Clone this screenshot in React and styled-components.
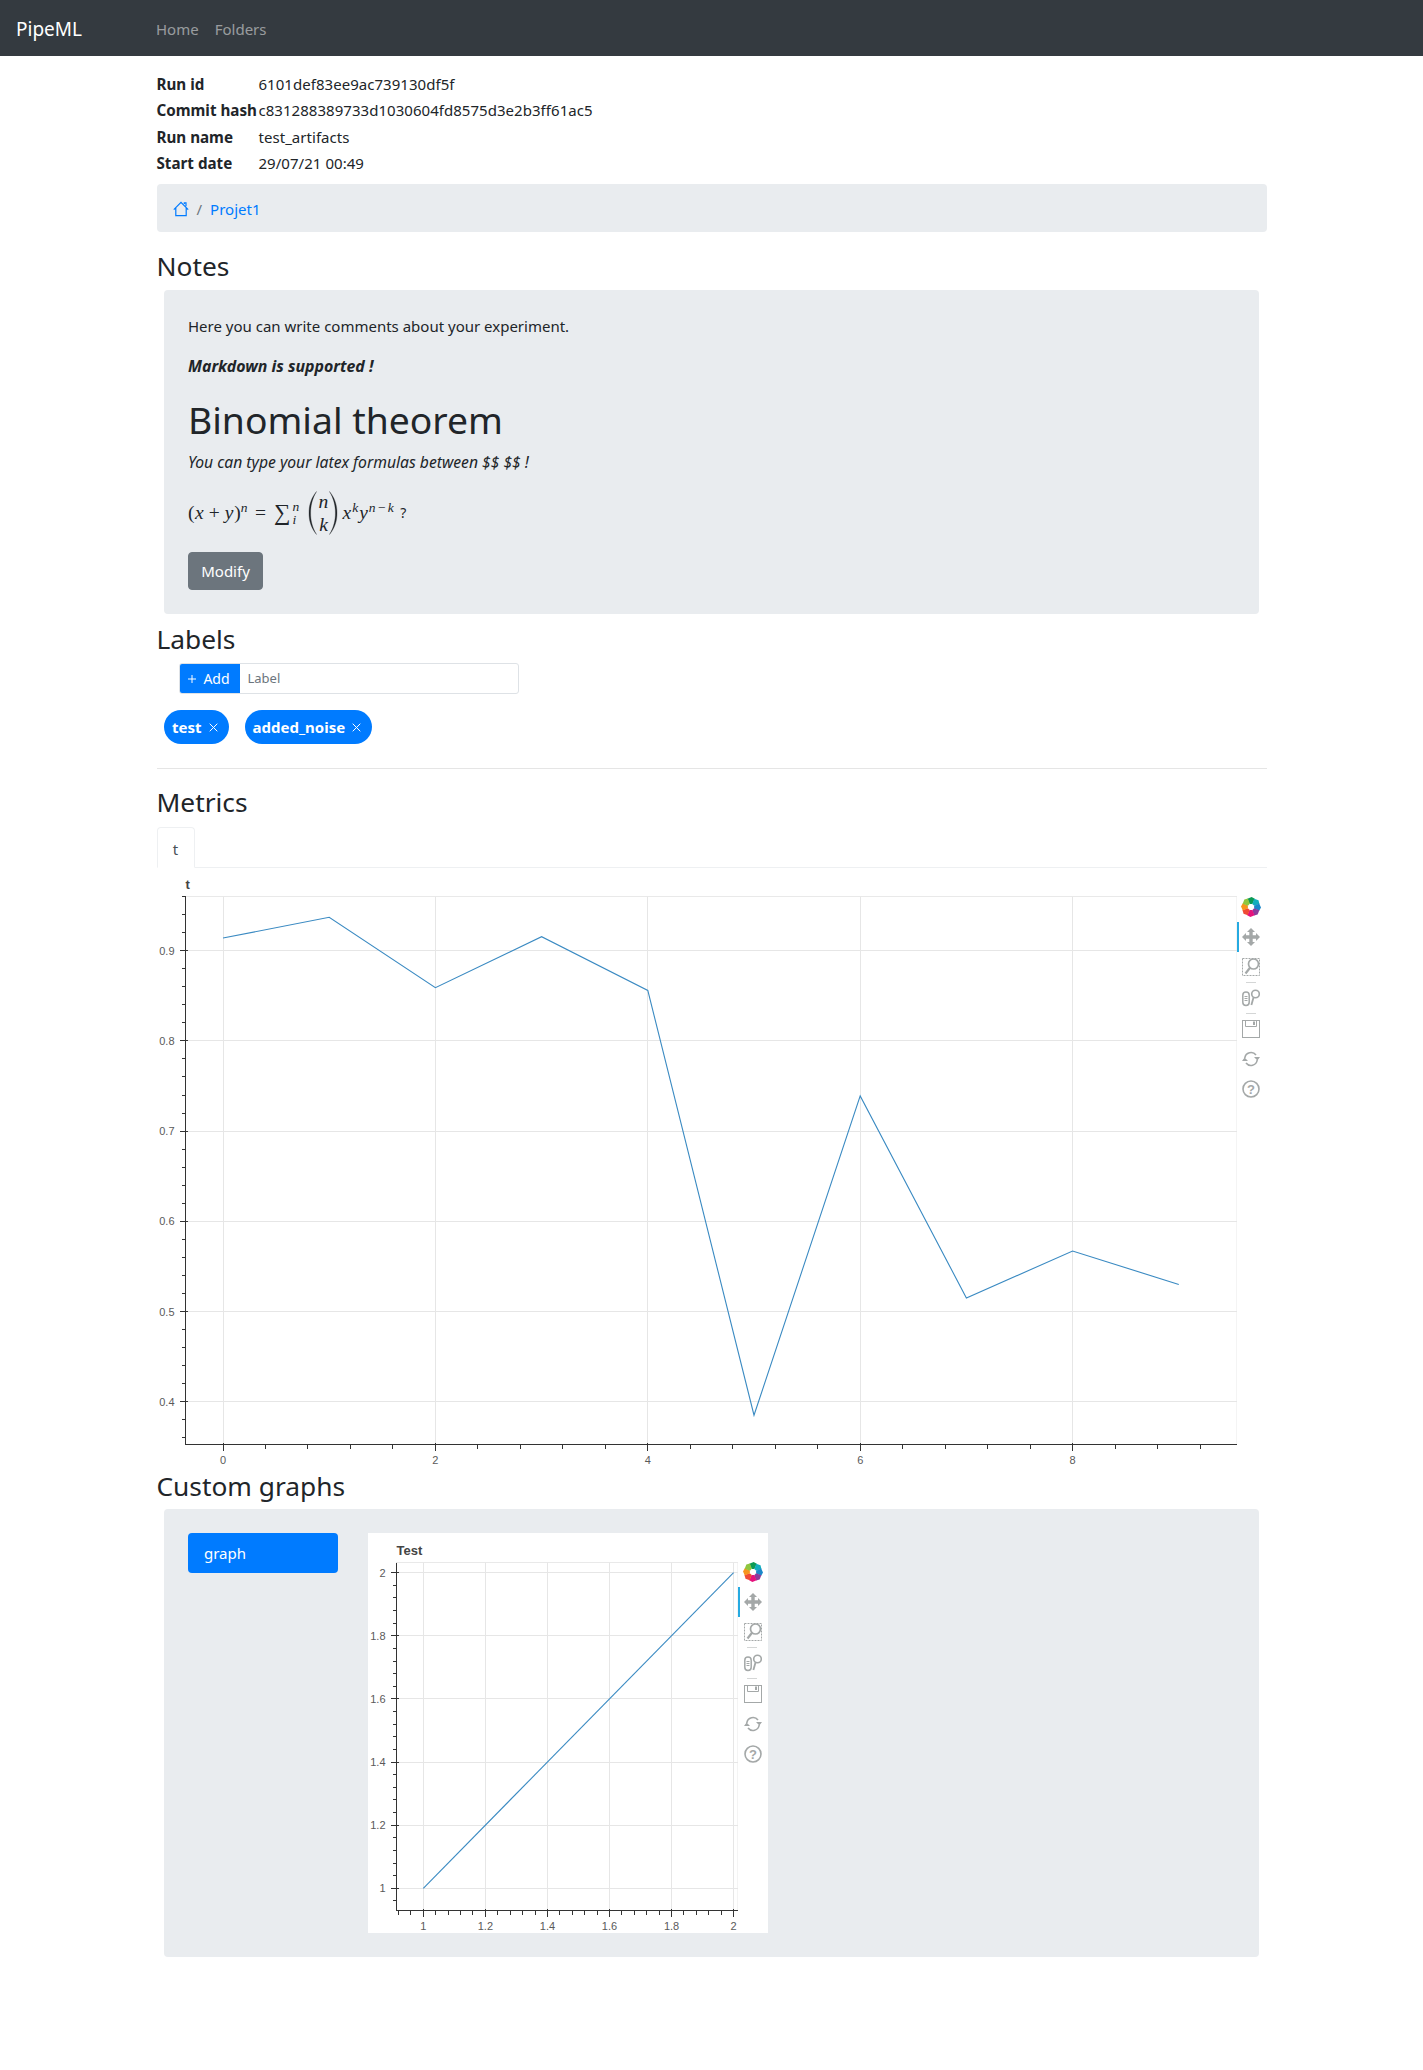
import React from 'react';
import styled, { createGlobalStyle } from 'styled-components';

const Global = createGlobalStyle`
  html, body { margin: 0; padding: 0; background: #fff; }
  body { font-family: "Noto Sans", "Open Sans", sans-serif; font-size: 15px; line-height: 24px; color: #212529; }
  * { box-sizing: border-box; }
`;

const Navbar = styled.nav`
  height: 56px; background: #343a40; display: flex; align-items: center; padding: 1px 16px 0;
`;
const Brand = styled.a`
  width: 140px; color: #fff; font-size: 19px;
`;
const NavLink = styled.a`
  color: rgba(255,255,255,.5); margin-right: 16px; font-size: 15px;
`;
const Container = styled.main`
  width: 1140px; margin: 0 auto; padding: 15px 15px 113px;
`;
const InfoRow = styled.div`
  display: grid; grid-template-columns: 102px 1fr; height: 26.25px; line-height: 26px; white-space: nowrap; letter-spacing: .04px;
`;
const InfoKey = styled.b`
  font-weight: 700; font-size: 15.2px; letter-spacing: 0;
`;
const Breadcrumb = styled.div`
  margin-top: 8px; height: 48px; background: #e9ecef; border-radius: 4px; display: flex; align-items: center; padding: 1px 16px 0; gap: 8px; color: #6c757d;
`;
const Crumb = styled.a`
  color: #007bff;
`;
const Heading = styled.h3`
  font-weight: 400; font-size: 26.3px; line-height: 34px; margin: ${p => p.$top}px 0 ${p => p.$bottom}px;
`;
const Panel = styled.section`
  margin: 0 7.5px; background: #e9ecef; border-radius: 4px; padding: 24px;
`;
const Para = styled.p`
  margin: 0 0 16px;
`;
const BoldLine = styled.b`
  font-weight: 700; font-style: italic; font-size: 15.9px;
`;
const ItalicLine = styled.i`
  font-style: italic; font-size: 15.7px;
`;
const Title = styled.h1`
  font-weight: 400; font-size: 37.3px; line-height: 48px; margin: 0 0 8px; padding-top: 2px; height: 48px;
`;
const MathLine = styled.div`
  display: flex; align-items: center; height: 46px; margin-bottom: 16px; font-family: "Liberation Serif", serif; font-size: 19.5px; white-space: pre;
`;
const MathVar = styled.i`
  font-style: italic; letter-spacing: 1px; margin-left: ${p => p.$lead || 0}px;
`;
const MathOp = styled.span`
  margin: 0 ${p => p.$before}px 0 ${p => p.$after}px;
`;
const Sum = styled.span`
  font-size: 23px;
`;
const Sup = styled.sup`
  font-size: 13.5px; line-height: 0; vertical-align: 7px; font-style: italic; letter-spacing: ${p => p.$track || 0}px;
`;
const ScriptStack = styled.span`
  display: inline-flex; flex-direction: column; font-size: 13.5px; line-height: 13px; font-style: italic; margin-left: 2px; width: 9px;
`;
const Binom = styled.span`
  display: inline-flex; align-items: center; margin: 0 3px 0 7px;
`;
const BinomBody = styled.span`
  display: inline-flex; flex-direction: column; align-items: center; font-style: italic; line-height: 23px; width: 12px; font-size: 19.5px;
`;
const QuestionMark = styled.span`
  font-family: "Noto Sans", sans-serif; font-size: 14px; margin-left: 5px;
`;
const ModifyButton = styled.button`
  display: block; width: 75px; height: 38px; background: #6c757d; color: #fff; border: 1px solid #6c757d; border-radius: 4px; font: inherit; padding: 0;
`;
const InputGroup = styled.div`
  margin-left: 22px; width: 340px; height: 31px; display: flex; border: 1px solid #dee2e6; border-radius: 3px; overflow: hidden;
`;
const AddButton = styled.button`
  width: 61px; margin: -1px 0 -1px -1px; background: #007bff; color: #fff; border: none; font: inherit; font-size: 14px; padding: 0; display: flex; align-items: center; justify-content: center; gap: 7px;
`;
const LabelInput = styled.div`
  flex: 1; padding-left: 8px; color: #6c757d; font-size: 13px; line-height: 29px;
`;
const Chips = styled.div`
  display: flex; gap: 16px; margin: 16px 0 0 7.5px;
`;
const Chip = styled.span`
  height: 34px; background: #007bff; color: #fff; border-radius: 17px; font-weight: 700; font-size: 15px; display: flex; align-items: center; padding: 0 11px 0 8px; gap: 7px;
`;
const Rule = styled.hr`
  border: 0; border-top: 1px solid rgba(0,0,0,.1); margin: 24px 0 0;
`;
const Tabs = styled.div`
  height: 41px; border-bottom: 1px solid #eef0f2; display: flex;
`;
const Tab = styled.div`
  width: 38px; height: 41px; background: #fff; border: 1px solid #eef0f2; border-bottom-color: #fff; border-radius: 4px 4px 0 0; color: #495057; text-align: center; line-height: 42px;
`;
const PlotWrap = styled.div`
  display: flex; width: ${p => p.$w}px; height: ${p => p.$h}px; background: #fff; flex: none;
`;
const Tools = styled.div`
  width: 30px; padding-top: 24px; display: flex; flex-direction: column; flex: none;
`;
const ToolCell = styled.div`
  width: 30px; height: 30px; display: flex; align-items: center; justify-content: center; padding-right: 1px;
  box-shadow: ${p => p.$active ? 'inset 2px 0 0 #26aae1' : 'none'};
`;
const ToolDivider = styled.div`
  width: 10px; height: 1px; background: #d4d6d6; margin-left: 9px;
`;
const PlotSvg = styled.svg`
  display: block; flex: none;
  text { font-family: "Liberation Sans", Arial, sans-serif; font-size: 11px; fill: #5a5a5a; }
  text.title { font-size: 13px; font-weight: 700; fill: #444; }
`;
const CustomBody = styled(Panel)`
  display: flex; gap: 30px;
`;
const GraphButton = styled.a`
  width: 150px; height: 40px; background: #007bff; color: #fff; border-radius: 4px; padding: 8px 16px; flex: none;
`;

const ICON = '#a4a8a8';
const LogoColors = ['#0c9b54', '#12aebd', '#1b87c9', '#8c3a9c', '#e5127d', '#ef4a36', '#f7941d', '#8fc63f'];
const Logo = () => (
  <svg width="20" height="20" viewBox="-10 -10 20 20">
    {LogoColors.map((c, i) => (
      <polygon key={c} fill={c} transform={`rotate(${i * 45})`} points="-1.3,-3.1 1.4,-3.1 3.8,-8.2 0.6,-10 -3.6,-8.2" />
    ))}
  </svg>
);
const PanIcon = () => (
  <svg width="18" height="18" viewBox="0 0 18 18"><path fill={ICON} d="M9 0 L13 4 H10.7 V7.3 H14 V5 L18 9 L14 13 V10.7 H10.7 V14 H13 L9 18 L5 14 H7.3 V10.7 H4 V13 L0 9 L4 5 V7.3 H7.3 V4 H5 Z" /></svg>
);
const BoxZoomIcon = () => (
  <svg width="18" height="18" viewBox="0 0 18 18" fill="none" stroke={ICON}>
    <rect x=".5" y=".5" width="17" height="17" strokeDasharray="2 1" />
    <circle cx="11.5" cy="6" r="5" fill="#fff" strokeWidth="1.7" />
    <path d="M8 9.8 L3.5 15.5" strokeWidth="2.2" />
  </svg>
);
const WheelIcon = () => (
  <svg width="18" height="18" viewBox="0 0 18 18" fill="none" stroke={ICON}>
    <rect x=".8" y="3" width="6.4" height="13.5" rx="3.2" strokeWidth="1.5" />
    <path d="M2.5 7.5 H5.5 M2.5 9.5 H5.5 M2.5 11.5 H5.5" />
    <circle cx="13.5" cy="5" r="3.8" strokeWidth="1.6" />
    <path d="M11.5 8.5 L9.4 16" strokeWidth="1.8" />
  </svg>
);
const SaveIcon = () => (
  <svg width="18" height="18" viewBox="0 0 18 18" fill="none" stroke={ICON}>
    <rect x=".5" y=".5" width="17" height="17" />
    <path d="M3.5 .5 V6.5 H14.5 V.5" />
    <rect x="11" y="1.5" width="2" height="3.5" fill={ICON} stroke="none" />
  </svg>
);
const ResetIcon = () => (
  <svg width="18" height="18" viewBox="0 0 18 18" fill="none" stroke={ICON} strokeWidth="1.6">
    <path d="M2.8 8 A6.3 6.3 0 0 1 14 5" />
    <path d="M15.2 10 A6.3 6.3 0 0 1 4 13" />
    <path fill={ICON} stroke="none" d="M12 7 H18 L15.4 10.5 Z M6 11 H0 L2.6 7.5 Z" />
  </svg>
);
const HelpIcon = () => (
  <svg width="18" height="18" viewBox="0 0 18 18" fill="none" stroke={ICON}>
    <circle cx="9" cy="9" r="8" strokeWidth="1.6" />
    <text x="9" y="13.5" textAnchor="middle" stroke="none" fill={ICON} fontFamily="Liberation Sans, sans-serif" fontWeight="700" fontSize="13">?</text>
  </svg>
);

const Toolbar = () => (
  <Tools>
    <ToolCell><Logo /></ToolCell>
    <ToolCell $active><PanIcon /></ToolCell>
    <ToolCell><BoxZoomIcon /></ToolCell>
    <ToolDivider />
    <ToolCell><WheelIcon /></ToolCell>
    <ToolDivider />
    <ToolCell><SaveIcon /></ToolCell>
    <ToolCell><ResetIcon /></ToolCell>
    <ToolCell><HelpIcon /></ToolCell>
  </Tools>
);

const range = (from, to, step) => {
  const out = [];
  const n = Math.round((to - from) / step);
  for (let i = 0; i <= n; i++) out.push(from + i * step);
  return out;
};
const crisp = v => Math.round(v - 0.5) + 0.5;

const Chart = ({ w, h, title, titleGap, box, x, y, data }) => {
  const sx = v => x.origin + (v - x.base) * x.scale;
  const sy = v => y.origin - (v - y.base) * y.scale;
  const inX = v => sx(v) >= box.l && sx(v) <= box.r;
  const inY = v => sy(v) >= box.t && sy(v) <= box.b;
  const xMajor = x.major.filter(inX);
  const yMajor = y.major.filter(inY);
  const xMinor = range(x.minorFrom, x.minorTo, x.minor).filter(inX);
  const yMinor = range(y.minorFrom, y.minorTo, y.minor).filter(inY);
  return (
    <PlotSvg width={w} height={h} viewBox={`0 0 ${w} ${h}`}>
      <rect x={box.l} y={box.t} width={box.r - box.l} height={box.b - box.t} fill="#fff" stroke="#e9e9e9" />
      {xMajor.map(v => <line key={v} x1={crisp(sx(v))} x2={crisp(sx(v))} y1={box.t} y2={box.b} stroke="#e6e6e6" />)}
      {yMajor.map(v => <line key={v} y1={crisp(sy(v))} y2={crisp(sy(v))} x1={box.l} x2={box.r} stroke="#e6e6e6" />)}
      <polyline fill="none" stroke="#3a8ac2" strokeWidth="1.1" points={data.map(([a, b]) => `${sx(a)},${sy(b)}`).join(' ')} />
      <g stroke="#333" shapeRendering="crispEdges">
        <line x1={box.l} x2={box.l} y1={box.t} y2={box.b + 0.5} />
        <line x1={box.l} x2={box.r} y1={box.b} y2={box.b} />
        {xMinor.map(v => <line key={v} x1={crisp(sx(v))} x2={crisp(sx(v))} y1={box.b} y2={box.b + 4} />)}
        {yMinor.map(v => <line key={v} y1={crisp(sy(v))} y2={crisp(sy(v))} x1={box.l - 4} x2={box.l} />)}
        {xMajor.map(v => <line key={v} x1={crisp(sx(v))} x2={crisp(sx(v))} y1={box.b - 2} y2={box.b + 6} />)}
        {yMajor.map(v => <line key={v} y1={crisp(sy(v))} y2={crisp(sy(v))} x1={box.l - 6} x2={box.l + 2} />)}
      </g>
      {xMajor.map(v => <text key={v} x={sx(v)} y={box.b + 19} textAnchor="middle">{x.label(v)}</text>)}
      {yMajor.map(v => <text key={v} x={box.l - 11} y={sy(v) + 4} textAnchor="end">{y.label(v)}</text>)}
      <text className="title" x={box.l} y={box.t - titleGap}>{title}</text>
    </PlotSvg>
  );
};

const metricValues = [0.914, 0.937, 0.859, 0.9155, 0.856, 0.385, 0.739, 0.515, 0.567, 0.53];

const fmt = v => String(Number(v.toFixed(2)));

const Paren = ({ flip }) => (
  <svg width="9" height="44" viewBox="0 0 9 44" style={flip ? { transform: 'scaleX(-1)' } : undefined}>
    <path d="M8.5 .5 C2.5 8 1 15 1 22 C1 29 2.5 36 8.5 43.5 C4 36 2.6 29 2.6 22 C2.6 15 4 8 8.5 .5 Z" fill="#212529" stroke="#212529" strokeWidth=".3" />
  </svg>
);
const CloseIcon = () => (
  <svg width="9" height="9" viewBox="0 0 9 9" stroke="#fff" strokeWidth="1"><path d="M.7 .7 L8.3 8.3 M8.3 .7 L.7 8.3" /></svg>
);
const PlusIcon = () => (
  <svg width="8" height="8" viewBox="0 0 8 8" stroke="#fff" strokeWidth="1"><path d="M4 0 V8 M0 4 H8" /></svg>
);

export default function App() {
  return (
    <>
      <Global />
      <Navbar>
        <Brand>PipeML</Brand>
        <NavLink>Home</NavLink>
        <NavLink>Folders</NavLink>
      </Navbar>
      <Container>
        <InfoRow><InfoKey>Run id</InfoKey><span>6101def83ee9ac739130df5f</span></InfoRow>
        <InfoRow><InfoKey>Commit hash</InfoKey><span>c831288389733d1030604fd8575d3e2b3ff61ac5</span></InfoRow>
        <InfoRow><InfoKey>Run name</InfoKey><span>test_artifacts</span></InfoRow>
        <InfoRow><InfoKey>Start date</InfoKey><span>29/07/21 00:49</span></InfoRow>
        <Breadcrumb>
          <svg width="16" height="16" viewBox="0 0 16 16" fill="none" stroke="#007bff" strokeWidth="1.2">
            <path d="M.8 8.6 L8 1.4 L15.2 8.6 M2.8 6.8 V14.6 H13.2 V6.8 M11.3 3 V1.8 H13 V5.2" />
          </svg>
          <span>/</span>
          <Crumb>Projet1</Crumb>
        </Breadcrumb>

        <Heading $top={17} $bottom={7}>Notes</Heading>
        <Panel>
          <Para>Here you can write comments about your experiment.</Para>
          <Para><BoldLine>Markdown is supported !</BoldLine></Para>
          <Title>Binomial theorem</Title>
          <Para><ItalicLine>You can type your latex formulas between $$ $$ !</ItalicLine></Para>
          <MathLine>
            <span>(<MathVar $lead={.5}>x</MathVar></span>
            <MathOp $after={4} $before={5}>+</MathOp>
            <span><MathVar>y</MathVar>)<Sup>n</Sup></span>
            <MathOp $after={7.5} $before={8}>=</MathOp>
            <Sum>∑</Sum>
            <ScriptStack><span>n</span><span>i</span></ScriptStack>
            <Binom>
              <Paren />
              <BinomBody><span>n</span><span>k</span></BinomBody>
              <Paren flip />
            </Binom>
            <span><MathVar $lead={1}>x</MathVar><Sup $track={1}>k</Sup><MathVar>y</MathVar><Sup $track={1.5}>n−k</Sup></span>
            <QuestionMark>?</QuestionMark>
          </MathLine>
          <ModifyButton>Modify</ModifyButton>
        </Panel>

        <Heading $top={8} $bottom={7}>Labels</Heading>
        <InputGroup>
          <AddButton><PlusIcon /><span>Add</span></AddButton>
          <LabelInput>Label</LabelInput>
        </InputGroup>
        <Chips>
          <Chip>test<CloseIcon /></Chip>
          <Chip>added_noise<CloseIcon /></Chip>
        </Chips>
        <Rule />

        <Heading $top={16} $bottom={8}>Metrics</Heading>
        <Tabs><Tab>t</Tab></Tabs>
        <PlotWrap $w={1110} $h={600}>
          <Chart
            w={1080}
            h={600}
            title="t"
            titleGap={8}
            box={{ l: 28.5, r: 1080, t: 28.5, b: 576.5 }}
            x={{ origin: 66, base: 0, scale: 106.2, major: [0, 2, 4, 6, 8], minor: 0.4, minorFrom: -0.4, minorTo: 9.6, label: fmt }}
            y={{ origin: 533.7, base: 0.4, scale: 902, major: [0.4, 0.5, 0.6, 0.7, 0.8, 0.9], minor: 0.02, minorFrom: 0.36, minorTo: 0.96, label: fmt }}
            data={metricValues.map((v, i) => [i, v])}
          />
          <Toolbar />
        </PlotWrap>

        <Heading $top={1} $bottom={6}>Custom graphs</Heading>
        <CustomBody>
          <GraphButton>graph</GraphButton>
          <PlotWrap $w={400} $h={400}>
            <Chart
              w={370}
              h={400}
              title="Test"
              titleGap={8}
              box={{ l: 28.5, r: 370, t: 29.5, b: 377.5 }}
              x={{ origin: 55.3, base: 1, scale: 310.3, major: [1, 1.2, 1.4, 1.6, 1.8, 2], minor: 0.04, minorFrom: 0.92, minorTo: 2.04, label: fmt }}
              y={{ origin: 355.3, base: 1, scale: 315.6, major: [1, 1.2, 1.4, 1.6, 1.8, 2], minor: 0.04, minorFrom: 0.92, minorTo: 2.04, label: fmt }}
              data={[[1, 1], [2, 2]]}
            />
            <Toolbar />
          </PlotWrap>
        </CustomBody>
      </Container>
    </>
  );
}
